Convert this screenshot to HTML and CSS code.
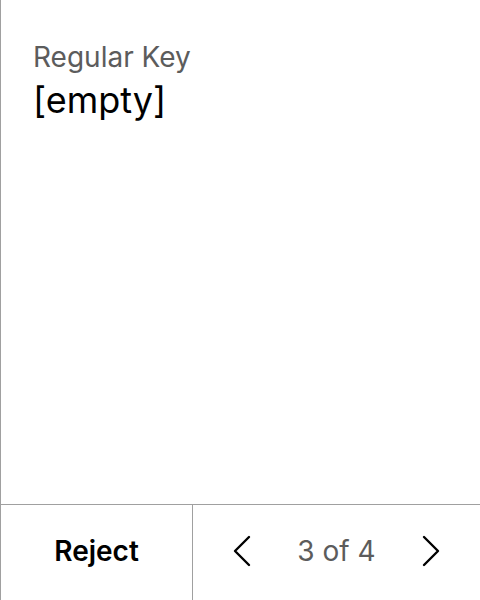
FILE: index.html
```html
<!DOCTYPE html>
<html>
<head>
<meta charset="utf-8">
<link rel="stylesheet" href="styles.css">
</head>
<body>
<div class="panel">
  <div class="content">
    <div class="label">Regular Key</div>
    <div class="value">[empty]</div>
  </div>
  <div class="footer">
    <button class="reject">Reject</button>
    <div class="pager">
      <button class="nav" aria-label="Previous">
        <svg width="18" height="32" viewBox="0 0 18 32"><path d="M16 2 L2 16 L16 30" fill="none" stroke="#000" stroke-width="2.4" stroke-linecap="round" stroke-linejoin="round"/></svg>
      </button>
      <span class="count">3 of 4</span>
      <button class="nav" aria-label="Next">
        <svg width="18" height="32" viewBox="0 0 18 32"><path d="M2 2 L16 16 L2 30" fill="none" stroke="#000" stroke-width="2.4" stroke-linecap="round" stroke-linejoin="round"/></svg>
      </button>
    </div>
  </div>
</div>
</body>
</html>
```
FILE: styles.css
```css
* { box-sizing: border-box; }
html, body { margin: 0; padding: 0; background: #fff; }
body { font-family: Inter, "Noto Sans", sans-serif; }
.panel {
  width: 480px;
  height: 600px;
  border-left: 1px solid #a0a0a0;
  display: flex;
  flex-direction: column;
}
.content {
  flex: 1;
  padding: 37px 32px 0;
}
.label {
  font-size: 28px;
  color: #5c5c5c;
  line-height: 40px;
}
.value {
  font-size: 36px;
  color: #000;
  line-height: 46px;
}
.footer {
  height: 96px;
  border-top: 1px solid #a0a0a0;
  display: flex;
  padding-bottom: 3px;
}
.reject {
  width: 192px;
  border: none;
  border-right: 1px solid #a0a0a0;
  margin-bottom: -3px;
  padding: 0 0 3px;
  background: none;
  font-family: inherit;
  font-size: 28px;
  font-weight: 600;
  color: #000;
}
.pager {
  flex: 1;
  display: flex;
  align-items: center;
  justify-content: center;
  gap: 46px;
}
.nav {
  border: none;
  background: none;
  padding: 0;
  display: flex;
}
.count {
  font-size: 28px;
  color: #5c5c5c;
}
```
